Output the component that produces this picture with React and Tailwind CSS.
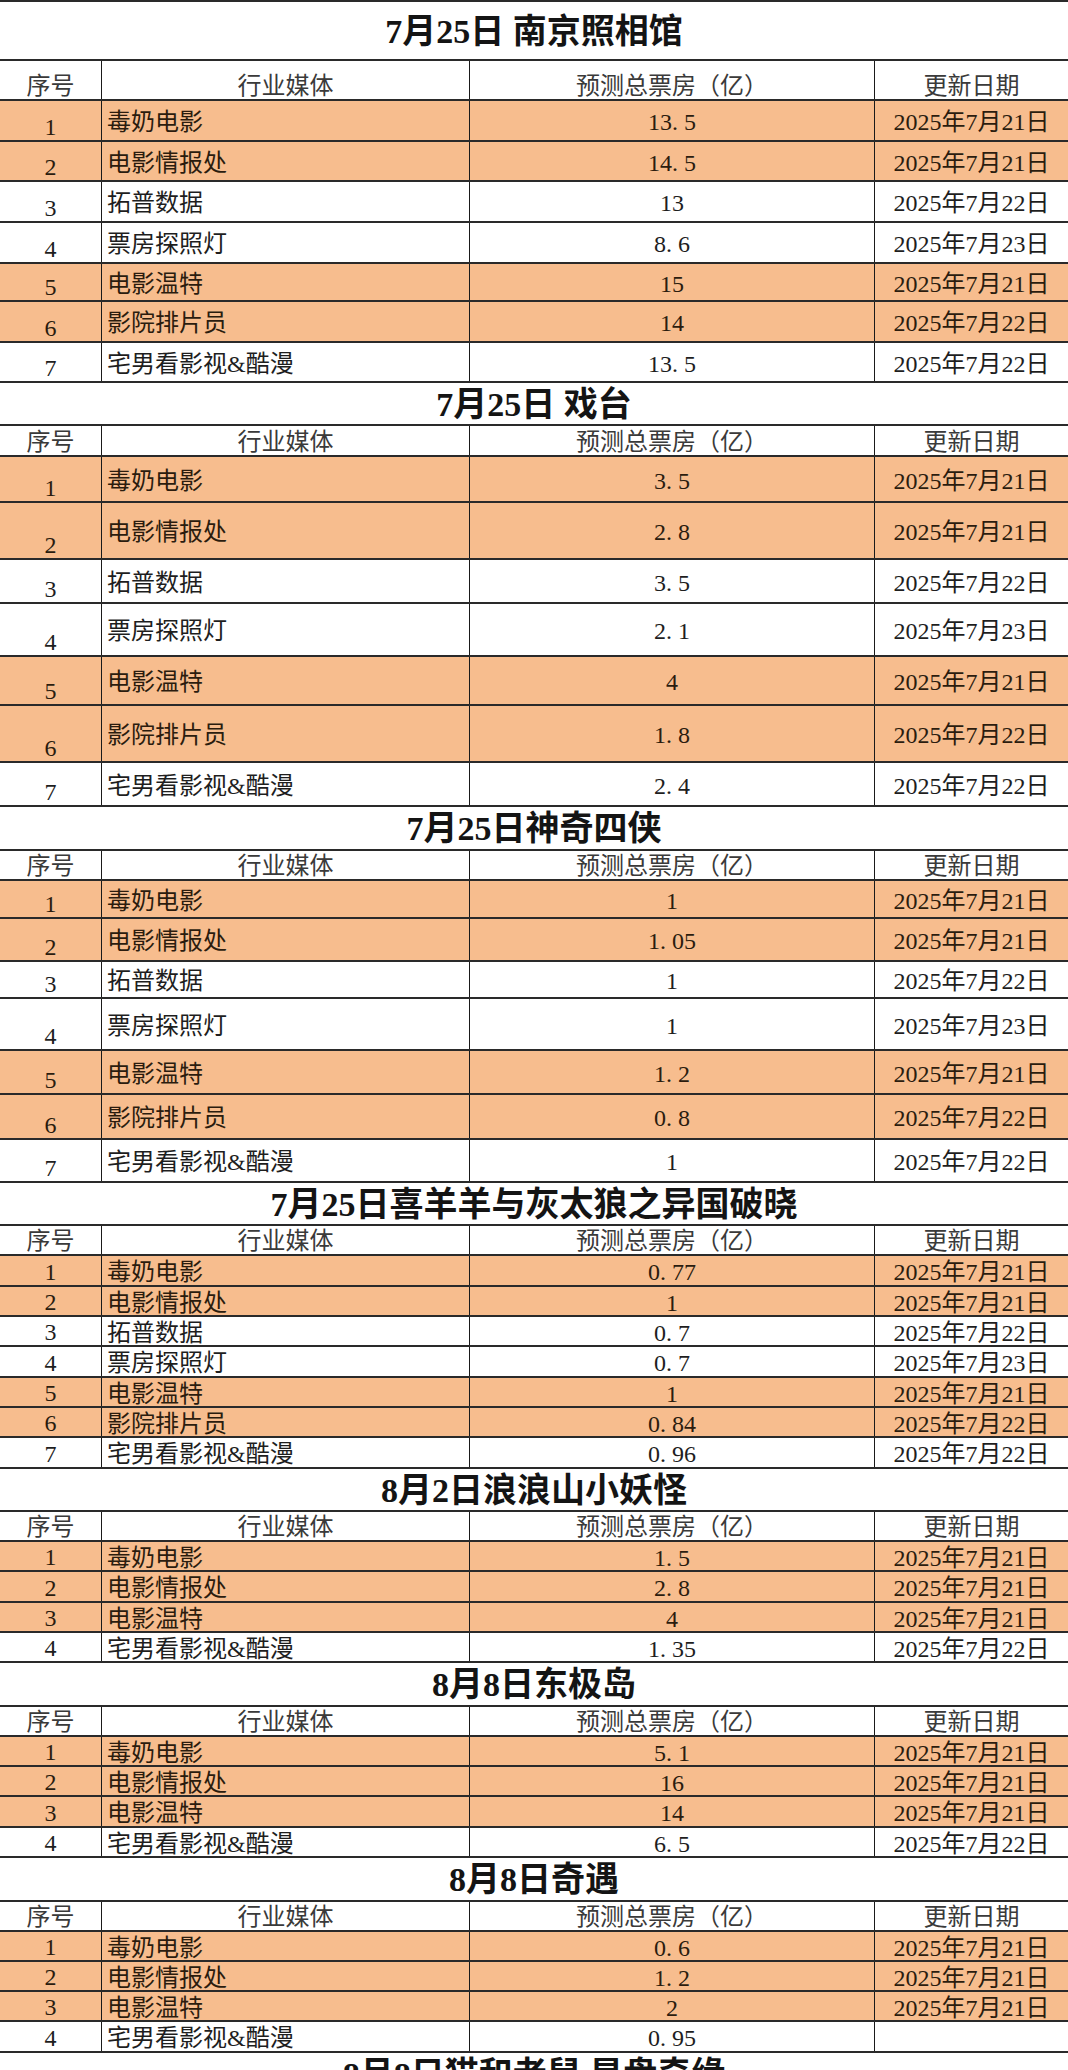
import React from "react";

const D = (d) => `2025年7月${d}日`;

const ROW_STD = ["毒奶电影", "电影情报处", "拓普数据", "票房探照灯", "电影温特", "影院排片员", "宅男看影视&酷漫"];
const ROW_SHORT = ["毒奶电影", "电影情报处", "电影温特", "宅男看影视&酷漫"];

const tables = [
  {
    title: "7月25日 南京照相馆",
    titleCls: "h-[61px] border-t-2",
    headCls: "h-[40px]",
    names: ROW_STD,
    vals: ["13.5", "14.5", "13", "8.6", "15", "14", "13.5"],
    dates: [21, 21, 22, 23, 21, 22, 22],
    orange: [true, true, false, false, true, true, false],
    hs: ["h-[41px]", "h-[40px]", "h-[41px]", "h-[41px]", "h-[38px]", "h-[41px]", "h-[40px]"],
  },
  {
    title: "7月25日 戏台",
    titleCls: "h-[43px]",
    headCls: "h-[31px]",
    names: ROW_STD,
    vals: ["3.5", "2.8", "3.5", "2.1", "4", "1.8", "2.4"],
    dates: [21, 21, 22, 23, 21, 22, 22],
    orange: [true, true, false, false, true, true, false],
    hs: ["h-[46px]", "h-[57px]", "h-[44px]", "h-[53px]", "h-[49px]", "h-[57px]", "h-[44px]"],
  },
  {
    title: "7月25日神奇四侠",
    titleCls: "h-[44px]",
    headCls: "h-[30px]",
    names: ROW_STD,
    vals: ["1", "1.05", "1", "1", "1.2", "0.8", "1"],
    dates: [21, 21, 22, 23, 21, 22, 22],
    orange: [true, true, false, false, true, true, false],
    hs: ["h-[38px]", "h-[43px]", "h-[37px]", "h-[52px]", "h-[44px]", "h-[45px]", "h-[43px]"],
  },
  {
    title: "7月25日喜羊羊与灰太狼之异国破晓",
    titleCls: "h-[43px]",
    headCls: "h-[30px]",
    names: ROW_STD,
    vals: ["0.77", "1", "0.7", "0.7", "1", "0.84", "0.96"],
    dates: [21, 21, 22, 23, 21, 22, 22],
    orange: [true, true, false, false, true, true, false],
    hs: ["h-[31px]", "h-[30px]", "h-[30px]", "h-[31px]", "h-[30px]", "h-[30px]", "h-[31px]"],
  },
  {
    title: "8月2日浪浪山小妖怪",
    titleCls: "h-[43px]",
    headCls: "h-[30px]",
    names: ROW_SHORT,
    vals: ["1.5", "2.8", "4", "1.35"],
    dates: [21, 21, 21, 22],
    orange: [true, true, true, false],
    hs: ["h-[30px]", "h-[31px]", "h-[30px]", "h-[30px]"],
  },
  {
    title: "8月8日东极岛",
    titleCls: "h-[44px]",
    headCls: "h-[30px]",
    names: ROW_SHORT,
    vals: ["5.1", "16", "14", "6.5"],
    dates: [21, 21, 21, 22],
    orange: [true, true, true, false],
    hs: ["h-[30px]", "h-[30px]", "h-[31px]", "h-[30px]"],
  },
  {
    title: "8月8日奇遇",
    titleCls: "h-[44px]",
    headCls: "h-[30px]",
    names: ROW_SHORT,
    vals: ["0.6", "1.2", "2", "0.95"],
    dates: [21, 21, 21, null],
    orange: [true, true, true, false],
    hs: ["h-[30px]", "h-[30px]", "h-[30px]", "h-[31px]"],
  },
];

const GRID = "grid grid-cols-[102px_368px_405px_193px]";
const HLINE = "border-b-2 border-[#2a2a2a]";
const VLINE = "border-r border-[#1a1a1a]";

function Num({ v }) {
  const parts = v.split(".");
  if (parts.length === 1) return <span>{v}</span>;
  return (
    <span>
      {parts[0]}
      <span className="inline-block w-[0.5em]">.</span>
      {parts[1]}
    </span>
  );
}

function Title({ text, cls }) {
  return (
    <div className={`${cls} ${HLINE} flex items-center justify-center bg-white`}>
      <span className="text-[34px] font-bold leading-none text-[#141414] pt-[2px]">{text}</span>
    </div>
  );
}

function Header({ cls }) {
  return (
    <div className={`${GRID} ${cls} ${HLINE} bg-white text-[24px] leading-none text-[#3a3a3a]`}>
      <div className={`${VLINE} h-full flex items-end justify-center pb-[1px]`}>序号</div>
      <div className={`${VLINE} h-full flex items-end justify-center pb-[1px]`}>行业媒体</div>
      <div className={`${VLINE} h-full flex items-end justify-center pb-[1px]`}>预测总票房（亿）</div>
      <div className="h-full flex items-end justify-center pb-[1px]">更新日期</div>
    </div>
  );
}

function Row({ idx, name, val, date, orange, h }) {
  const bg = orange ? "bg-[#f7bd8e] text-[#2b1c0e]" : "bg-white text-[#1e1e1e]";
  return (
    <div className={`${GRID} ${h} ${HLINE} ${bg} text-[24px] leading-none`}>
      <div className={`${VLINE} h-full flex items-end justify-center pb-[1px]`}>{idx}</div>
      <div className={`${VLINE} h-full flex items-center pl-[5px] pt-[3px]`}>{name}</div>
      <div className={`${VLINE} h-full flex items-center justify-center pt-[3px]`}>
        <Num v={val} />
      </div>
      <div className="h-full flex items-center justify-center pt-[3px]">{date ? D(date) : ""}</div>
    </div>
  );
}

export default function App() {
  return (
    <div className="w-[1068px] h-[2070px] overflow-hidden bg-white font-['Liberation_Serif','Noto_Sans_CJK_SC',serif]">
      {tables.map((t, ti) => (
        <section key={ti}>
          <Title text={t.title} cls={t.titleCls} />
          <Header cls={t.headCls} />
          {t.names.map((n, i) => (
            <Row
              key={i}
              idx={i + 1}
              name={n}
              val={t.vals[i]}
              date={t.dates[i]}
              orange={t.orange[i]}
              h={t.hs[i]}
            />
          ))}
        </section>
      ))}
      <Title text="8月8日猫和老鼠 星盘奇缘" cls="h-[44px]" />
    </div>
  );
}
